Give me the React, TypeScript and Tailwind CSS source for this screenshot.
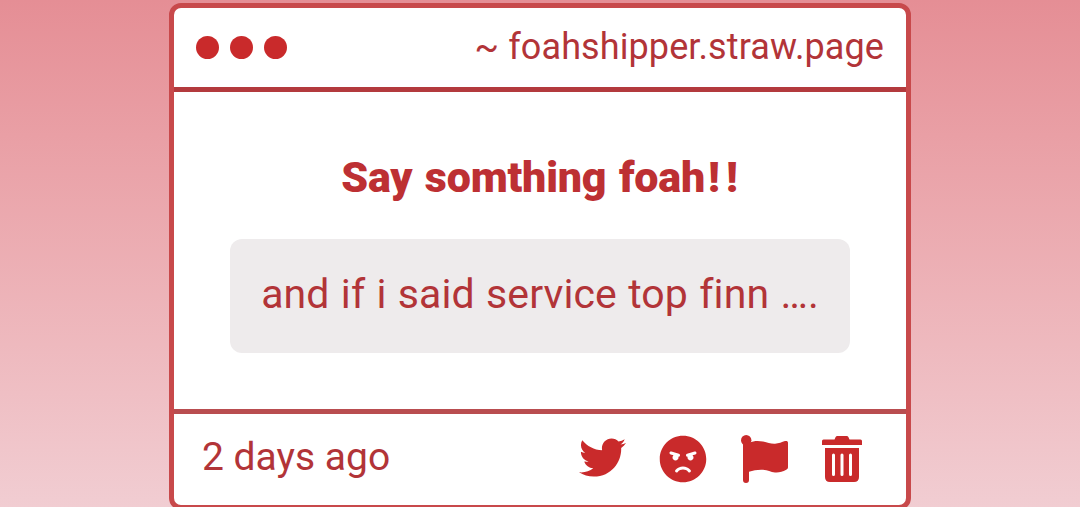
import React from 'react';
import { FaAngry, FaTwitter } from 'react-icons/fa';


const FlagIcon = () => (
    <svg className="h-[48px] w-[47px]" viewBox="0 0 47 48" fill="currentColor">
        <circle cx="5.200" cy="5.200" r="5.200" />
        <path d="M2 5h6v3c5-2.300 9-2.300 14-1.400 5 1.100 7.500 2.400 12 2.200 3.800-.2 7-1.600 10-2.700 1.700-.5 3 .1 3 1.600v24.500c0 1.200-.6 1.900-1.800 2.600-3.700 2-7.200 2.900-11.200 2.600-4.500-.4-7-2.300-12-2.700-5-.3-9.500.6-14 2V45a3 3 0 0 1-6 0z" />
    </svg>
);

const TrashIcon = () => (
    <svg className="h-[46px] w-[40px]" viewBox="0 0 40 46" fill="currentColor">
        <path d="M12.500 3.500L13.500 1.200Q14 0 15.500 0h9Q26 0 26.500 1.200L27.500 3.500H38.500Q40 3.500 40 5v4H0V5q0-1.500 1.500-1.500z" />
        <path fillRule="evenodd" d="M3 12h34v29q0 5-5 5H8q-5 0-5-5zM11.500 17.500a1.500 1.500 0 0 0-1.500 1.500v19.500a1.500 1.500 0 0 0 3 0v-19.500a1.500 1.500 0 0 0-1.500-1.500zM20 17.500a1.500 1.500 0 0 0-1.500 1.500v19.500a1.500 1.500 0 0 0 3 0v-19.500A1.500 1.500 0 0 0 20 17.500zM28.500 17.500a1.500 1.500 0 0 0-1.500 1.500v19.500a1.500 1.500 0 0 0 3 0v-19.500a1.500 1.500 0 0 0-1.500-1.500z" />
    </svg>
);

const App = () => {
    return (
        <div className="h-[507px] overflow-hidden bg-linear-to-b from-[#e58e95] to-[#f1cdd2] pt-[3px] font-['Roboto',sans-serif] text-[#b23438]">
            <div className="mx-auto flex h-[507px] w-[742px] flex-col rounded-xl border-[5px] border-[#c8494b] bg-white">
                <div className="flex h-[84px] shrink-0 items-center justify-between border-b-[5px] border-[#b33a3d] pl-[22px] pr-[22px]">
                    <div className="flex gap-[11px]">
                        <span className="size-[23px] rounded-full bg-[#c92a2b]"></span>
                        <span className="size-[23px] rounded-full bg-[#c92a2b]"></span>
                        <span className="size-[23px] rounded-full bg-[#c92a2b]"></span>
                    </div>
                    <p className="whitespace-nowrap pb-[2px] text-[36px] leading-[42px] tracking-[0.1px]">~ foahshipper.straw.page</p>
                </div>

                <div className="flex flex-1 flex-col items-center pt-[59px]">
                    <h1 className="whitespace-nowrap pl-[5px] text-[43px] font-black leading-[52px] tracking-[-0.2px] text-[#bd3033] [word-spacing:2px]">Say somthing foah<span className="ml-[3px] tracking-[6px]">!!</span></h1>
                    <div className="mt-[36px] flex h-[114px] w-[620px] justify-center rounded-xl bg-[#eeebec] pt-[31px]">
                        <p className="whitespace-nowrap text-[41px] leading-[48px] tracking-[0.1px] [word-spacing:1px]">and if i said service top finn ….</p>
                    </div>
                </div>

                <div className="flex h-[96px] shrink-0 items-center justify-between border-t-[5px] border-[#b94d50] pl-[28px] pr-[44px]">
                    <p className="whitespace-nowrap pb-[6px] text-[39px] leading-[44px]">2 days ago</p>
                    <div className="flex items-center pb-[2px] text-[#c92a2b]">
                        <FaTwitter className="mb-[2px] mr-[33px] size-[47px]" />
                        <FaAngry className="mr-[34px] size-[48px]" />
                        <span className="mr-[34px]"><FlagIcon /></span>
                        <TrashIcon />
                    </div>
                </div>
            </div>
        </div>
    );
};

export default App;
